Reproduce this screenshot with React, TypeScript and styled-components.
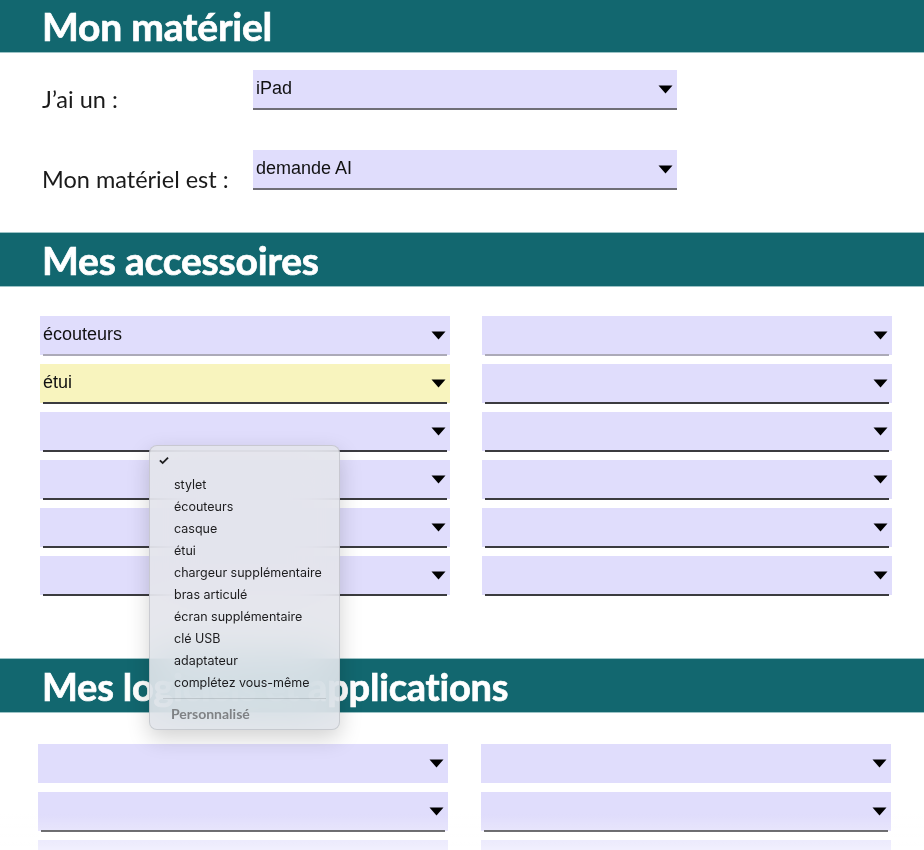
import React from "react";
import styled, { createGlobalStyle } from "styled-components";

const GlobalStyle = createGlobalStyle`
  body {
    margin: 0;
    background: #ffffff;
    font-family: "Lato", "Open Sans", sans-serif;
  }
`;

const Page = styled.div`
  position: relative;
  width: 924px;
  display: flex;
  flex-direction: column;
`;

const SectionHeader = styled.h2<{
  $top?: number;
  $height?: number;
  $first?: boolean;
  $size?: number;
}>`
  margin: ${(p) => p.$top ?? 0}px 0 0 0;
  height: ${(p) => p.$height ?? 55}px;
  box-sizing: border-box;
  padding-left: 42px;
  display: flex;
  align-items: center;
  background: #12676f;
  border-top: ${(p) => (p.$first ? "none" : "1px solid #9cc3c6")};
  border-bottom: 1px solid #9cc3c6;
  color: #ffffff;
  font-family: "Lato", sans-serif;
  font-weight: 700;
  font-size: ${(p) => p.$size ?? 39}px;
  letter-spacing: -0.2px;
  -webkit-text-stroke: 0.7px #ffffff;
`;

const MaterialBlock = styled.div`
  display: flex;
  flex-direction: column;
  gap: 41px;
  padding: 17px 0 0 42px;
`;

const FieldRow = styled.div`
  height: 39px;
  display: grid;
  grid-template-columns: 211px 424px;
  align-items: start;
`;

const Label = styled.label`
  padding-top: 15px;
  font-family: "Lato", sans-serif;
  font-size: 23.5px;
  line-height: 28px;
  color: #1a1a1a;
  white-space: nowrap;
`;

const SelectGrid = styled.div<{ $top: number; $left: number; $gap: number }>`
  display: grid;
  grid-template-columns: 410px 410px;
  column-gap: ${(p) => p.$gap}px;
  row-gap: 9px;
  margin-top: ${(p) => p.$top}px;
  padding-left: ${(p) => p.$left}px;
`;

type Line = "none" | "light" | "mid" | "dark";

const lineColors: Record<Line, string> = {
  none: "transparent",
  light: "#acaab8",
  mid: "#6f6e76",
  dark: "#3b3b3f",
};

const SelectBox = styled.div<{ $bg: string; $line: Line; $inset: number }>`
  position: relative;
  height: 39px;
  display: flex;
  align-items: center;
  justify-content: space-between;
  padding: 0 4px 0 3px;
  background: ${(p) => p.$bg};
  font-family: "Liberation Sans", Arial, sans-serif;
  font-size: 18px;
  color: #111111;

  &::after {
    content: "";
    position: absolute;
    left: ${(p) => p.$inset}px;
    right: ${(p) => p.$inset}px;
    bottom: -1px;
    height: 2px;
    background: ${(p) => lineColors[p.$line]};
  }
`;

const Value = styled.span`
  margin-top: -3px;
`;

const Arrow = () => (
  <svg width="15" height="9" viewBox="0 0 15 9">
    <path d="M0.5 0.5 L14.5 0.5 L7.5 8.5 Z" fill="#000000" />
  </svg>
);

const Select = ({
  value,
  bg = "#e0ddfc",
  line = "dark",
  inset = 3,
}: {
  value?: string;
  bg?: string;
  line?: Line;
  inset?: number;
}) => (
  <SelectBox $bg={bg} $line={line} $inset={inset}>
    <Value>{value}</Value>
    <Arrow />
  </SelectBox>
);

const Menu = styled.div`
  position: absolute;
  left: 149px;
  top: 445px;
  width: 191px;
  box-sizing: border-box;
  padding: 5px 0 5px 0;
  border-radius: 8px;
  border: 1px solid rgba(0, 0, 0, 0.12);
  background: rgba(228, 229, 234, 0.88);
  backdrop-filter: blur(24px) saturate(1.6);
  box-shadow: 0 8px 22px rgba(0, 0, 0, 0.18);
  font-family: "Inter", "Open Sans", sans-serif;
  font-size: 12.5px;
  color: #1c1c1e;
`;

const MenuItem = styled.div`
  position: relative;
  height: 22px;
  display: flex;
  align-items: center;
  padding-left: 24px;
`;

const Check = styled.span`
  position: absolute;
  left: 8px;
  top: 1px;
  font-size: 13px;
  font-weight: 700;
`;

const Separator = styled.div`
  height: 1px;
  margin: 5px 13px 3px 13px;
  background: rgba(0, 0, 0, 0.12);
`;

const MenuGroup = styled.div`
  height: 22px;
  display: flex;
  align-items: center;
  padding-left: 21px;
  font-family: "Lato", sans-serif;
  font-size: 14px;
  font-weight: 700;
  color: #7f8285;
`;

const BottomFade = styled.div`
  position: fixed;
  left: 0;
  right: 0;
  bottom: 0;
  height: 36px;
  background: linear-gradient(rgba(255, 255, 255, 0), rgba(255, 255, 255, 0.55));
  pointer-events: none;
`;

const accessoryOptions = [
  "stylet",
  "écouteurs",
  "casque",
  "étui",
  "chargeur supplémentaire",
  "bras articulé",
  "écran supplémentaire",
  "clé USB",
  "adaptateur",
  "complétez vous-même",
];

export default function App() {
  return (
    <Page>
      <GlobalStyle />
      <SectionHeader $height={53} $first>
        Mon matériel
      </SectionHeader>

      <MaterialBlock>
        <FieldRow>
          <Label>J’ai un :</Label>
          <Select value="iPad" line="mid" inset={0} />
        </FieldRow>
        <FieldRow>
          <Label>Mon matériel est :</Label>
          <Select value="demande AI" line="mid" inset={0} />
        </FieldRow>
      </MaterialBlock>

      <SectionHeader $top={43}>Mes accessoires</SectionHeader>

      <SelectGrid $top={29} $left={40} $gap={32}>
        <Select value="écouteurs" line="light" />
        <Select line="light" />
        <Select value="étui" bg="#f8f4be" />
        <Select />
        <Select />
        <Select />
        <Select />
        <Select />
        <Select />
        <Select />
        <Select />
        <Select />
      </SelectGrid>

      <SectionHeader $top={63} $size={38}>
        Mes logiciels et applications
      </SectionHeader>

      <SelectGrid $top={31} $left={38} $gap={33}>
        <Select line="none" />
        <Select line="none" />
        <Select />
        <Select />
        <Select />
        <Select />
      </SelectGrid>

      <Menu>
        <MenuItem>
          <Check>✓</Check>
        </MenuItem>
        {accessoryOptions.map((o) => (
          <MenuItem key={o}>{o}</MenuItem>
        ))}
        <Separator />
        <MenuGroup>Personnalisé</MenuGroup>
      </Menu>
      <BottomFade />
    </Page>
  );
}
